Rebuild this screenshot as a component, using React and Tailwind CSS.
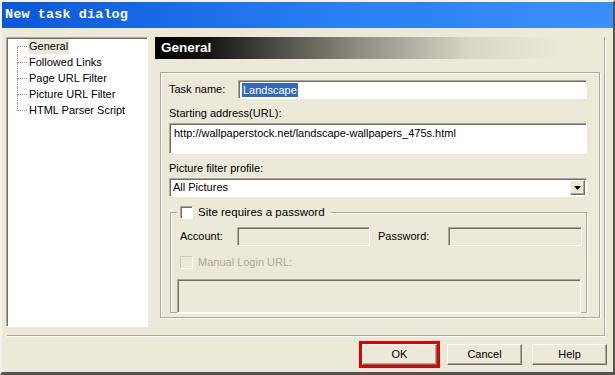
import React from 'react'

const treeItems = ['General', 'Followed Links', 'Page URL Filter', 'Picture URL Filter', 'HTML Parser Script']

// sunken XP field edges
const sunken = 'border border-t-[#aca899] border-l-[#aca899] border-b-white border-r-white shadow-[inset_1px_1px_0_#716f64]'
const etched = 'border border-[#aca899] shadow-[1px_1px_0_#ffffff,inset_1px_1px_0_#ffffff]'
const raised = 'border border-t-white border-l-white border-b-[#716f64] border-r-[#716f64] shadow-[inset_-1px_-1px_0_#aca899]'

const Checkbox = ({ disabled }) => (
  <span
    className={
      disabled
        ? 'w-[13px] h-[13px] shrink-0 border border-t-[#cac8bb] border-l-[#cac8bb] border-b-white border-r-white bg-[#ece9d8]'
        : 'w-[13px] h-[13px] shrink-0 border border-t-[#aca899] border-l-[#aca899] border-b-white border-r-white bg-white shadow-[inset_1px_1px_0_#716f64]'
    }
  />
)

const Button = ({ children, focused }) => (
  <button
    className={`w-[75px] h-[21px] bg-[#ece9d8] text-[11px] text-black flex items-center justify-center ${raised} ${
      focused ? 'outline-[3px] outline-solid outline-[#e00000]' : ''
    }`}
  >
    {children}
  </button>
)

export default function App() {
  return (
    <div className="w-[615px] h-[375px] bg-[#ece9d8] flex flex-col overflow-hidden text-[11px] text-black font-['Liberation_Sans',Arial,sans-serif] border-t-2 border-t-[#f4f3ee] border-l-2 border-l-[#f4f3ee] border-r-2 border-r-[#55534c] border-b-[3px] border-b-[#55534c]">
      {/* title bar */}
      <div className="h-[26px] shrink-0 flex items-center pl-[3px] bg-[linear-gradient(90deg,#0a58da,#2a7ff2_55%,#3a8ff8)]">
        <span className="text-white font-bold text-[13.5px] font-['Liberation_Mono','DejaVu_Sans_Mono',monospace] tracking-[0.1px]">
          New task dialog
        </span>
      </div>

      {/* main */}
      <div className="h-[307px] shrink-0 flex pl-[4px] pt-[9px]">
        {/* tree */}
        <div className={`w-[142px] h-[290px] bg-white pt-[1px] pl-[10px] ${sunken}`}>
          {treeItems.map((item, i) => (
            <div key={item} className="flex h-4">
              <div className="w-[10px] flex flex-col">
                <div
                  className={
                    i > 0
                      ? 'h-[8px] border-l border-b border-dotted border-[#9a9a9a]'
                      : 'h-[8px] border-b border-dotted border-[#9a9a9a]'
                  }
                />
                <div
                  className={
                    i < treeItems.length - 1 ? 'h-[8px] border-l border-dotted border-[#9a9a9a]' : 'h-[8px]'
                  }
                />
              </div>
              <span
                className={
                  i === 0
                    ? 'ml-[1px] px-[1px] h-[15px] leading-[15px] bg-[#ece9d8] text-[#000]'
                    : 'ml-[1px] px-[1px] h-[15px] leading-[15px]'
                }
              >
                {item}
              </span>
            </div>
          ))}
        </div>

        {/* right column */}
        <div className="ml-[7px] w-[450px] flex flex-col border-r border-r-[#aca899] shadow-[1px_0_0_#ffffff]">
          <div className="h-[22px] shrink-0 flex items-center pl-[6px] bg-[linear-gradient(90deg,#000000_0%,#151512_12%,#8d8b80_45%,#d9d6c6_70%,#ece9d8_90%)]">
            <span className="text-white font-bold text-[13.5px]">General</span>
          </div>

          <div className={`ml-[5px] mt-[13px] w-[440px] h-[246px] pl-[8px] pr-[12px] pt-[7px] ${etched}`}>
            <div className="flex items-center">
              <span className="w-[69px]">Task name:</span>
              <div className={`flex-1 h-[19px] bg-white flex items-center pl-[3px] ${sunken}`}>
                <span className="bg-[#316ac5] text-white leading-[14px] px-[1px]">Landscape</span>
              </div>
            </div>

            <div className="mt-[7px] h-[14px] leading-[14px]">Starting address(URL):</div>
            <div className={`mt-[3px] h-[31px] bg-white pl-[4px] pt-[2px] leading-[14px] ${sunken}`}>
              http://wallpaperstock.net/landscape-wallpapers_475s.html
            </div>

            <div className="mt-[7px] h-[14px] leading-[14px]">Picture filter profile:</div>
            <div className={`mt-[3px] h-[19px] bg-white flex items-center justify-between pl-[3px] pr-[1px] ${sunken}`}>
              <span>All Pictures</span>
              <span className={`w-[15px] h-[15px] bg-[#ece9d8] flex items-center justify-center ${raised}`}>
                <svg width="7" height="4" viewBox="0 0 7 4">
                  <path d="M0 0h7L3.5 4z" fill="#000" />
                </svg>
              </span>
            </div>

            {/* password group */}
            <div className={`relative mt-[15px] ml-[1px] h-[101px] pl-[6px] pr-[4px] pt-[14px] ${etched}`}>
              <div className="absolute -top-[7px] left-[6px] flex items-center gap-[5px] bg-[#ece9d8] pl-[3px] pr-[6px] h-[13px]">
                <Checkbox />
                <span className="text-[11.5px]">Site requires a password</span>
              </div>

              <div className="flex items-center pl-[3px]">
                <span className="w-[57px]">Account:</span>
                <div className={`w-[133px] h-[19px] bg-[#ece9d8] ${sunken}`} />
                <span className="ml-[8px] w-[70px]">Password:</span>
                <div className={`flex-1 h-[19px] bg-[#ece9d8] ${sunken}`} />
              </div>

              <div className="mt-[8px] flex items-center gap-[5px] pl-[3px] text-[#aca899]">
                <Checkbox disabled />
                <span>Manual Login URL:</span>
              </div>

              <div className={`mt-[8px] w-[404px] h-[34px] bg-[#ece9d8] ${sunken}`} />
            </div>
          </div>
        </div>
      </div>

      {/* separator */}
      <div className="h-[2px] shrink-0 ml-[5px] mr-[8px] border-t border-t-[#aca899] border-b border-b-white" />

      {/* buttons */}
      <div className="flex-1 flex justify-end items-start gap-[10px] pt-[7px] pr-[6px]">
        <Button focused>OK</Button>
        <Button>Cancel</Button>
        <Button>Help</Button>
      </div>
    </div>
  )
}
